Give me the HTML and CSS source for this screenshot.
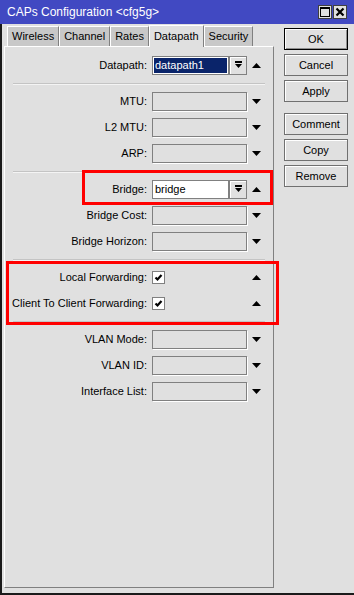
FILE: index.html
```html
<!DOCTYPE html>
<html lang="en">
<head>
    <meta charset="UTF-8">
    <title>CAPs Configuration</title>
    <link rel="stylesheet" href="styles.css">
</head>
<body>
    <div class="window">
        <div class="titlebar">
            <span class="title">CAPs Configuration &lt;cfg5g&gt;</span>
            <div class="wbtns">
                <span class="wbtn">
                    <svg width="10" height="10" viewBox="0 0 10 10"><rect x="0.5" y="0.5" width="9" height="9" fill="none" stroke="#000"/><rect x="0" y="0" width="10" height="2" fill="#000"/></svg>
                </span>
                <span class="wbtn">
                    <svg width="10" height="10" viewBox="0 0 10 10"><path d="M1.5 1.5 L8.5 8.5 M8.5 1.5 L1.5 8.5" stroke="#000" stroke-width="2.2"/></svg>
                </span>
            </div>
        </div>

        <div class="main">
            <div class="left">
                <div class="tabs">
                    <span class="tab">Wireless</span>
                    <span class="tab">Channel</span>
                    <span class="tab">Rates</span>
                    <span class="tab active">Datapath</span>
                    <span class="tab">Security</span>
                </div>
                <div class="panel">
                    <div class="row">
                        <span class="lbl">Datapath:</span>
                        <div class="combo">
                            <div class="combo-in"><span class="sel">datapath1</span></div>
                            <span class="dd"><svg width="7" height="8" viewBox="0 0 7 8"><rect x="0" y="0" width="7" height="2" fill="#000"/><polygon points="0,3 7,3 3.5,7" fill="#000"/></svg></span>
                        </div>
                        <span class="arrow"><svg width="9" height="5" viewBox="0 0 9 5"><polygon points="0,5 9,5 4.5,0" fill="#000"/></svg></span>
                    </div>
                    <div class="sep"></div>
                    <div class="row">
                        <span class="lbl">MTU:</span>
                        <span class="field"></span>
                        <span class="arrow"><svg width="9" height="5" viewBox="0 0 9 5"><polygon points="0,0 9,0 4.5,5" fill="#000"/></svg></span>
                    </div>
                    <div class="row">
                        <span class="lbl">L2 MTU:</span>
                        <span class="field"></span>
                        <span class="arrow"><svg width="9" height="5" viewBox="0 0 9 5"><polygon points="0,0 9,0 4.5,5" fill="#000"/></svg></span>
                    </div>
                    <div class="row">
                        <span class="lbl">ARP:</span>
                        <span class="field"></span>
                        <span class="arrow"><svg width="9" height="5" viewBox="0 0 9 5"><polygon points="0,0 9,0 4.5,5" fill="#000"/></svg></span>
                    </div>
                    <div class="sep"></div>
                    <div class="row">
                        <span class="lbl">Bridge:</span>
                        <div class="combo">
                            <div class="combo-in plain"><span class="val">bridge</span></div>
                            <span class="dd"><svg width="7" height="8" viewBox="0 0 7 8"><rect x="0" y="0" width="7" height="2" fill="#000"/><polygon points="0,3 7,3 3.5,7" fill="#000"/></svg></span>
                        </div>
                        <span class="arrow"><svg width="9" height="5" viewBox="0 0 9 5"><polygon points="0,5 9,5 4.5,0" fill="#000"/></svg></span>
                    </div>
                    <div class="row">
                        <span class="lbl">Bridge Cost:</span>
                        <span class="field"></span>
                        <span class="arrow"><svg width="9" height="5" viewBox="0 0 9 5"><polygon points="0,0 9,0 4.5,5" fill="#000"/></svg></span>
                    </div>
                    <div class="row">
                        <span class="lbl">Bridge Horizon:</span>
                        <span class="field"></span>
                        <span class="arrow"><svg width="9" height="5" viewBox="0 0 9 5"><polygon points="0,0 9,0 4.5,5" fill="#000"/></svg></span>
                    </div>
                    <div class="sep"></div>
                    <div class="row">
                        <span class="lbl">Local Forwarding:</span>
                        <span class="check-cell"><span class="check"><svg width="9" height="9" viewBox="0 0 9 9"><path d="M1.5 4.5 L3.5 6.5 L7.5 2" fill="none" stroke="#000" stroke-width="2.2"/></svg></span></span>
                        <span class="arrow"><svg width="9" height="5" viewBox="0 0 9 5"><polygon points="0,5 9,5 4.5,0" fill="#000"/></svg></span>
                    </div>
                    <div class="row">
                        <span class="lbl">Client To Client Forwarding:</span>
                        <span class="check-cell"><span class="check"><svg width="9" height="9" viewBox="0 0 9 9"><path d="M1.5 4.5 L3.5 6.5 L7.5 2" fill="none" stroke="#000" stroke-width="2.2"/></svg></span></span>
                        <span class="arrow"><svg width="9" height="5" viewBox="0 0 9 5"><polygon points="0,5 9,5 4.5,0" fill="#000"/></svg></span>
                    </div>
                    <div class="sep"></div>
                    <div class="row">
                        <span class="lbl">VLAN Mode:</span>
                        <span class="field"></span>
                        <span class="arrow"><svg width="9" height="5" viewBox="0 0 9 5"><polygon points="0,0 9,0 4.5,5" fill="#000"/></svg></span>
                    </div>
                    <div class="row">
                        <span class="lbl">VLAN ID:</span>
                        <span class="field"></span>
                        <span class="arrow"><svg width="9" height="5" viewBox="0 0 9 5"><polygon points="0,0 9,0 4.5,5" fill="#000"/></svg></span>
                    </div>
                    <div class="row">
                        <span class="lbl">Interface List:</span>
                        <span class="field"></span>
                        <span class="arrow"><svg width="9" height="5" viewBox="0 0 9 5"><polygon points="0,0 9,0 4.5,5" fill="#000"/></svg></span>
                    </div>
                </div>
            </div>

            <div class="side">
                <span class="btn default">OK</span>
                <span class="btn">Cancel</span>
                <span class="btn">Apply</span>
                <span class="btn spaced">Comment</span>
                <span class="btn">Copy</span>
                <span class="btn">Remove</span>
            </div>
        </div>

        <div class="mark mark-bridge"></div>
        <div class="mark mark-fwd"></div>
    </div>
</body>
</html>
```

FILE: styles.css
```css
body {
    margin: 0;
    font-family: "Liberation Sans", Arial, sans-serif;
    font-size: 11px;
    color: #000;
    background-color: #e0e0e0;
}

.window {
    position: relative;
    width: 354px;
    height: 595px;
    box-sizing: border-box;
    background-color: #e0e0e0;
    border-left: 2px solid #1a1a1a;
    border-bottom: 2px solid #1a1a1a;
    display: flex;
    flex-direction: column;
}

.titlebar {
    height: 24px;
    flex-shrink: 0;
    background-color: #4149c2;
    color: #fff;
    font-size: 12px;
    display: flex;
    align-items: center;
    justify-content: space-between;
    margin-left: -2px;
    padding: 0 7px 0 7px;
}

.wbtns {
    display: flex;
    gap: 1px;
}

.wbtn {
    width: 14px;
    height: 14px;
    box-sizing: border-box;
    background-color: #e0e0e0;
    border: 1px solid #404040;
    display: flex;
    align-items: center;
    justify-content: center;
}

.main {
    flex: 1;
    display: flex;
}

.left {
    width: 272px;
    padding-left: 2px;
    box-sizing: border-box;
    display: flex;
    flex-direction: column;
}

.tabs {
    display: flex;
    align-items: flex-end;
    height: 22px;
    padding-left: 3px;
}

.tab {
    height: 20px;
    box-sizing: border-box;
    padding: 0 4px;
    line-height: 18px;
    background-color: #c8c8c8;
    border: 1px solid #fff;
    border-right-color: #808080;
    border-bottom: none;
}

.tab.active {
    height: 22px;
    line-height: 20px;
    background-color: #e0e0e0;
    margin-bottom: -1px;
    position: relative;
    z-index: 1;
}

.panel {
    flex: 1;
    margin-bottom: 5px;
    border: 1px solid #fff;
    border-right-color: #808080;
    border-bottom-color: #808080;
    padding-top: 8px;
    display: flex;
    flex-direction: column;
    gap: 6px;
}

.row {
    display: flex;
    align-items: center;
    height: 20px;
}

.lbl {
    width: 142px;
    text-align: right;
    margin-right: 5px;
    white-space: nowrap;
}

.field {
    width: 95px;
    height: 19px;
    box-sizing: border-box;
    border: 1px solid #808080;
    box-shadow: 1px 1px 0 #fff;
}

.combo {
    width: 95px;
    height: 19px;
    display: flex;
}

.combo-in {
    flex: 1;
    box-sizing: border-box;
    border: 1px solid #808080;
    background-color: #fff;
    padding: 1px;
    display: flex;
}

.sel {
    flex: 1;
    background-color: #0a246a;
    color: #fff;
    line-height: 15px;
    padding-left: 1px;
}

.val {
    line-height: 15px;
    padding-left: 1px;
}

.dd {
    width: 18px;
    box-sizing: border-box;
    border: 1px solid #808080;
    box-shadow: inset 1px 1px 0 #fff;
    display: flex;
    align-items: center;
    justify-content: center;
}

.arrow {
    width: 10px;
    margin-left: 4px;
    display: flex;
    justify-content: center;
}

.check-cell {
    width: 95px;
    display: flex;
}

.check {
    width: 13px;
    height: 13px;
    box-sizing: border-box;
    border: 1px solid #808080;
    background-color: #fff;
    display: flex;
    align-items: center;
    justify-content: center;
}

.sep {
    height: 1px;
    margin: 2px 8px 1px 8px;
    background-color: #c4c4c4;
    box-shadow: 0 1px 0 #f4f4f4;
}

.side {
    flex: 1;
    display: flex;
    flex-direction: column;
    gap: 4px;
    padding: 4px 0 0 10px;
}

.btn {
    width: 64px;
    height: 22px;
    box-sizing: border-box;
    border: 1px solid #707070;
    box-shadow: inset 1px 1px 0 #fff;
    text-align: center;
    line-height: 20px;
}

.btn.default {
    border-color: #000;
    box-shadow: inset 1px 1px 0 #fff, inset -1px -1px 0 #909090;
}

.btn.spaced {
    margin-top: 7px;
}

.mark {
    position: absolute;
    box-sizing: border-box;
    border: 3px solid #f00;
}

.mark-bridge {
    left: 80px;
    top: 170px;
    width: 191px;
    height: 35px;
}

.mark-fwd {
    left: 4px;
    top: 261px;
    width: 273px;
    height: 64px;
}
```
